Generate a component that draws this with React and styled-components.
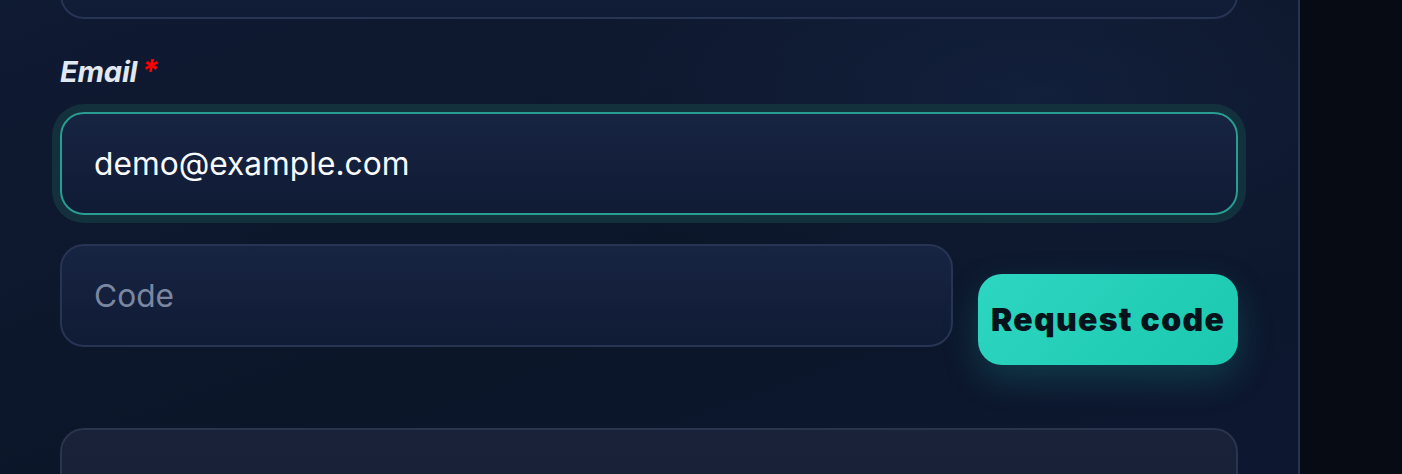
import React, { useState } from "react";
import styled, { createGlobalStyle } from "styled-components";

const GlobalStyle = createGlobalStyle`
  html, body {
    margin: 0;
    padding: 0;
    background: #070b14;
    font-family: Inter, "Noto Sans", "Liberation Sans", sans-serif;
    overflow: hidden;
  }
  * { box-sizing: border-box; }
`;

export default function App() {
  const [email, setEmail] = useState("demo@example.com");
  const [code, setCode] = useState("");

  return (
    <>
      <GlobalStyle />
      <Layout>
        <Panel>
          <Form onSubmit={(e) => e.preventDefault()}>
            <TextInput type="text" aria-label="Name" defaultValue="" />

            <Field>
              <Label htmlFor="email">
                Email<Required>*</Required>
              </Label>
              <TextInput
                id="email"
                type="email"
                value={email}
                onChange={(e) => setEmail(e.target.value)}
                focused
              />
            </Field>

            <CodeRow>
              <CodeField>
                <TextInput
                  type="text"
                  placeholder="Code"
                  value={code}
                  onChange={(e) => setCode(e.target.value)}
                />
                <Hint />
              </CodeField>
              <RequestButton type="button">Request code</RequestButton>
            </CodeRow>

            <TextInput type="password" aria-label="Password" muted />
          </Form>
        </Panel>
        <Aside />
      </Layout>
    </>
  );
}

const Layout = styled.div`
  display: flex;
  height: 474px;
  overflow: hidden;
`;

const Panel = styled.div`
  width: 1300px;
  flex-shrink: 0;
  padding: 0 60px 0 60px;
  border-right: 2px solid #26324f;
  background:
    radial-gradient(ellipse 700px 300px at 80% 20%, rgba(30, 48, 90, 0.35), transparent 70%),
    linear-gradient(160deg, #0f1a33 0%, #0c1629 55%, #0d1730 100%);
`;

const Aside = styled.div`
  flex: 1;
  background: #070b14;
`;

const Form = styled.form`
  display: flex;
  flex-direction: column;
  margin-top: -84px;
  gap: 30px;
`;

const Field = styled.div`
  display: flex;
  flex-direction: column;
  gap: 18px;
`;

const Label = styled.label`
  font-size: 29px;
  line-height: 44px;
  font-weight: 700;
  font-style: italic;
  color: #e2e8f0;
  letter-spacing: -0.2px;
`;

const Required = styled.span`
  color: #ff0000;
  margin-left: 4px;
  font-size: 31px;
`;

const TextInput = styled.input`
  width: 100%;
  height: 103px;
  padding: 0 32px;
  border-radius: 24px;
  border: 2px solid ${(p) => (p.focused ? "#2a9d92" : p.muted ? "#2a344d" : "#283454")};
  background: ${(p) =>
    p.muted
      ? "linear-gradient(180deg, #192238 0%, #161f34 100%)"
      : "linear-gradient(180deg, #172442 0%, #101b35 100%)"};
  box-shadow: ${(p) => (p.focused ? "0 0 0 8px #13303d" : "none")};
  color: #f8fafc;
  font-family: Inter, "Noto Sans", "Liberation Sans", sans-serif;
  font-size: 31.7px;
  outline: none;

  &::placeholder {
    color: #7b87a1;
  }
`;

const CodeRow = styled.div`
  display: flex;
  align-items: center;
  gap: 25px;
  margin-top: -1px;
  margin-bottom: 4px;
`;

const CodeField = styled.div`
  flex: 1;
  display: flex;
  flex-direction: column;
`;

const Hint = styled.div`
  height: 47px;
`;

const RequestButton = styled.button`
  flex-shrink: 0;
  width: 260px;
  height: 91px;
  padding: 0;
  border: none;
  border-radius: 24px;
  background: linear-gradient(135deg, #2dd6c0 0%, #1cc8b0 100%);
  box-shadow: 0 14px 36px rgba(32, 190, 180, 0.22);
  color: #06131a;
  font-family: Inter, "Noto Sans", "Liberation Sans", sans-serif;
  font-size: 32px;
  font-weight: 900;
  letter-spacing: 1.3px;
  white-space: nowrap;
  cursor: pointer;
`;
